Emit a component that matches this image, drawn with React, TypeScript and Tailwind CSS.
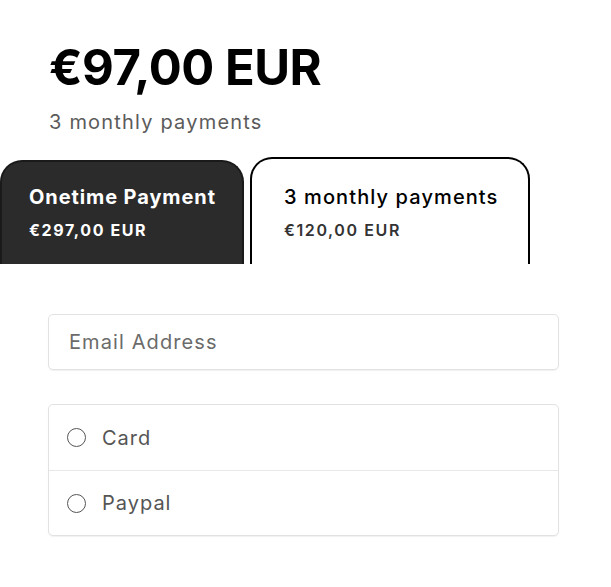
import { useState } from "react";

const App = () => {
  const [plan, setPlan] = useState("monthly");
  const [method, setMethod] = useState("");

  return (
    <div className="min-h-[587px] w-[611px] bg-white font-['Inter',sans-serif] text-black">
      <div className="px-[49px] pt-[40px]">
        <h1 className="text-[49px] font-bold leading-[56px] tracking-[-0.5px]">€97,00 EUR</h1>
        <p className="mt-[13px] text-[20px] leading-[26px] tracking-[1.2px] text-[#5b5b5b]">3 monthly payments</p>
      </div>

      <div className="mt-[22px] flex items-end gap-[6px]">
        <button
          onClick={() => setPlan("onetime")}
          className="flex h-[104px] w-[244px] flex-col items-start rounded-t-[22px] border-2 border-b-0 border-[#1a1a1a] bg-[#2b2b2b] pl-[27px] pt-[22px] text-left text-white"
        >
          <span className="text-[20px] font-bold leading-[27px] tracking-[0.9px]">Onetime Payment</span>
          <span className="mt-[9px] text-[16px] font-bold leading-[20px] tracking-[1.6px]">€297,00 EUR</span>
        </button>
        <button
          onClick={() => setPlan("monthly")}
          className="flex h-[107px] w-[280px] flex-col items-start rounded-t-[22px] border-2 border-b-0 border-black bg-white pl-[32px] pt-[25px] text-left"
        >
          <span className="text-[20px] font-medium leading-[27px] tracking-[1.1px]">3 monthly payments</span>
          <span className="mt-[9px] text-[16px] font-semibold leading-[20px] tracking-[1.6px] text-[#333]">€120,00 EUR</span>
        </button>
      </div>

      <div className="px-[48px] pt-[50px]">
        <input
          type="email"
          placeholder="Email Address"
          className="h-[56px] w-[511px] rounded-[5px] border border-[#e2e2e2] px-[20px] text-[20px] tracking-[1.1px] text-black shadow-[0_1px_1px_rgba(0,0,0,0.06)] outline-none placeholder:text-[#6b6b6b]"
        />

        <div className="mt-[34px] w-[511px] rounded-[5px] border border-[#e2e2e2] shadow-[0_1px_1px_rgba(0,0,0,0.06)]">
          {["Card", "Paypal"].map((m, i) => (
            <label
              key={m}
              className={`flex h-[65px] cursor-pointer items-center gap-[16px] pl-[18px] ${i > 0 ? "border-t border-[#e8e8e8]" : ""}`}
            >
              <input
                type="radio"
                name="method"
                checked={method === m}
                onChange={() => setMethod(m)}
                className="h-[19px] w-[19px] appearance-none rounded-full border-[1.5px] border-[#555] bg-white checked:border-[6px] checked:border-black"
              />
              <span className="text-[20px] tracking-[1px] text-[#555]">{m}</span>
            </label>
          ))}
        </div>
      </div>
    </div>
  );
};

export default App;
